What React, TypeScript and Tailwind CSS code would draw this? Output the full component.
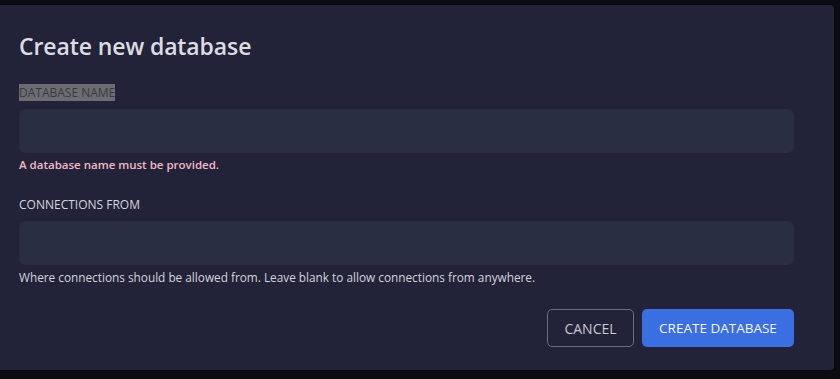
export default function App() {
    return (
        <div className="h-[379px] w-[840px] bg-[#0b0b12] pt-[5px] font-['Open_Sans',sans-serif]">
            <div className="w-[834px] h-[365px] bg-[#222339] rounded-r-[4px] pl-[19px] pr-[40px] pt-[27px]">
                <h2 className="text-[23px] leading-[28px] font-semibold text-[#dcdce2] tracking-[-0.1px]">
                    Create new database
                </h2>

                <label className="block mt-[25px] text-[12px] leading-[15px]">
                    <span className="bg-[#6c6c72] text-[#3a3a44]">DATABASE NAME</span>
                </label>
                <div className="mt-[9px] h-[44px] rounded-[7px] bg-[#2a2e42]"></div>
                <p className="mt-[4px] text-[11.5px] leading-[16px] font-semibold text-[#f2b8c4]">
                    A database name must be provided.
                </p>

                <label className="block mt-[24px] text-[12px] leading-[16px] text-[#d4d4dc]">
                    CONNECTIONS FROM
                </label>
                <div className="mt-[8px] h-[44px] rounded-[7px] bg-[#2a2e42]"></div>
                <p className="mt-[4px] text-[11.8px] leading-[16px] text-[#d4d4dc]">
                    Where connections should be allowed from. Leave blank to allow connections from anywhere.
                </p>

                <div className="mt-[24px] flex justify-end gap-[8px]">
                    <button className="h-[38px] w-[87px] rounded-[5px] border border-[#6a6c80] text-[14px] text-[#c8c8d0]">
                        CANCEL
                    </button>
                    <button className="h-[38px] w-[152px] rounded-[5px] bg-[#3b6ee0] text-[13.5px] text-[#f4f6ff]">
                        CREATE DATABASE
                    </button>
                </div>
            </div>
        </div>
    );
}
